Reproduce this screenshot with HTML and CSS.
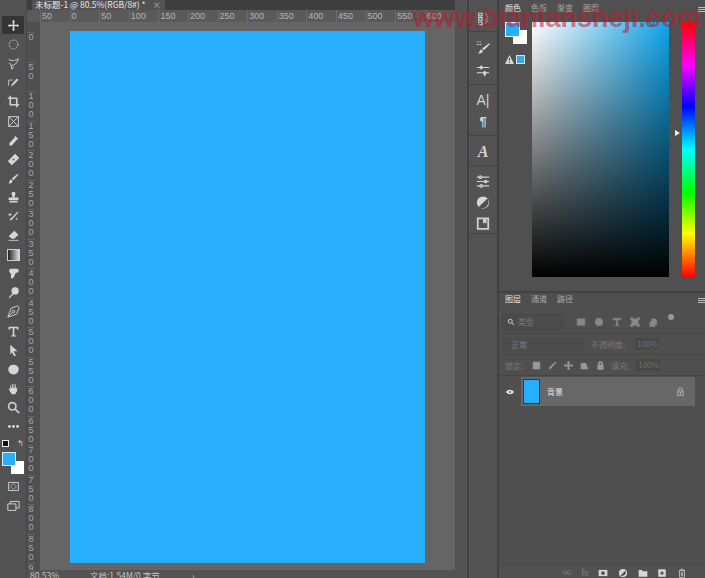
FILE: index.html
```html
<!DOCTYPE html>
<html lang="zh-CN">
  <head>
    <meta charset="UTF-8" />
    <title>未标题-1</title>
    <link rel="stylesheet" href="styles.css">
  </head>
  <body>
    <div class="app">
      <div class="tools">
        <span class="tool active"><svg viewBox="0 0 16 16"><path d="M8 1l2 2.500H9v3.500h3.500V6L15 8l-2.500 2V9H9v3.500h1L8 15l-2-2.500h1V9H3.500v1L1 8l2.500-2v1H7V3.500H6z"/></svg></span>
        <span class="tool"><svg viewBox="0 0 16 16" class="line"><circle cx="8" cy="8" r="5.500" stroke-dasharray="2 1.500"/></svg></span>
        <span class="tool"><svg viewBox="0 0 16 16" class="line"><path d="M2 3c4 2 8 2 12-1-1 4-3 7-6 8-2 1-4 0-5-3M5 10l1 5 2-3"/></svg></span>
        <span class="tool"><svg viewBox="0 0 16 16"><path d="M6 10l6-7 2 2-6 6-3 2z"/><path class="thin" d="M2 12V5h5" fill="none"/></svg></span>
        <span class="tool"><svg viewBox="0 0 16 16" class="line wide"><path d="M4 1v11h11M1 4h11v11"/></svg></span>
        <span class="tool"><svg viewBox="0 0 16 16" class="line"><path d="M2 2h12v12H2zM2 2l12 12M14 2L2 14"/></svg></span>
        <span class="tool"><svg viewBox="0 0 16 16"><path d="M10 2l4 4-2 1-6 7H3v-3l6-6z"/></svg></span>
        <span class="tool"><svg viewBox="0 0 16 16"><path d="M10 1l5 5-9 9-5-5z"/><path class="cut" d="M7 7h2v2H7z"/></svg></span>
        <span class="tool"><svg viewBox="0 0 16 16"><path d="M13 2l1 1-6 7-2-2zM5 9l2 2c-1 3-3 3-5 3 1-1 1-4 3-5z"/></svg></span>
        <span class="tool"><svg viewBox="0 0 16 16"><path d="M8 1a2.500 2.500 0 012 4l-1 3h5v3H2V8h5L6 5a2.500 2.500 0 012-4zM3 12h10v2H3z"/></svg></span>
        <span class="tool"><svg viewBox="0 0 16 16"><path d="M13 2l1 1-9 10-2-1z"/><path d="M3 3l1 2 2-1-1 2 1 1-2-.5L3 8l-.5-2L1 5h2zM12 9l.5 1.500L14 11l-1.500.5L12 13l-.5-1.500L10 11l1.500-.5z"/></svg></span>
        <span class="tool"><svg viewBox="0 0 16 16"><path d="M9 2l5 5-5 5H6L2 9z"/><path class="thin" d="M2 14h12"/></svg></span>
        <span class="tool"><span class="gradient-tool"></span></span>
        <span class="tool"><svg viewBox="0 0 16 16"><path d="M5 2h7c2 0 3 2 2 4l-4 2c0 3-2 6-4 6s-1-3-1-5L3 6c-1-2 0-4 2-4z"/></svg></span>
        <span class="tool"><svg viewBox="0 0 16 16"><circle cx="10" cy="6" r="4.500"/><path d="M7 9l1 1-5 5-1-1z"/></svg></span>
        <span class="tool"><svg viewBox="0 0 16 16" class="line"><path d="M13 1L5 4 2 12l-1 3 3-1 8-3 3-8zM2 14l5-5"/><circle cx="8" cy="8" r="1.500"/></svg></span>
        <span class="tool"><svg viewBox="0 0 16 16"><path d="M2 2h12v4h-1c0-1-1-2-2-2H9v8c0 1 1 1 2 1v1H5v-1c1 0 2 0 2-1V4H5C4 4 3 5 3 6H2z"/></svg></span>
        <span class="tool"><svg viewBox="0 0 16 16"><path d="M4 1l9 8H8l3 5-2 1-3-5-2 3z"/></svg></span>
        <span class="tool"><svg viewBox="0 0 16 16"><ellipse cx="8" cy="8" rx="6.500" ry="6"/></svg></span>
        <span class="tool"><svg viewBox="0 0 16 16"><path d="M4 8V4h1v3h1V2h1v5h1V2h1v5h1V3h1v6l1-2h1l-1 5-2 3H6L2 9l1-1z"/></svg></span>
        <span class="tool"><svg viewBox="0 0 16 16" class="line wide"><circle cx="6.500" cy="6.500" r="4.500"/><path d="M10 10l5 5"/></svg></span>
        <span class="tool"><svg viewBox="0 0 16 16"><circle cx="3" cy="8" r="1.800"/><circle cx="8" cy="8" r="1.800"/><circle cx="13" cy="8" r="1.800"/></svg></span>
        <div class="swatch-keys"><span class="default-key"></span><span class="swap-key">↰</span></div>
        <div class="swatches"><span class="back"></span><span class="fore"></span></div>
        <span class="tool"><svg viewBox="0 0 16 16" class="line"><path d="M2 3h12v10H2z"/><circle cx="8" cy="8" r="3" stroke-dasharray="1.500 1"/></svg></span>
        <span class="tool"><svg viewBox="0 0 16 16" class="line"><path d="M1 6h10v8H1zM4 6V3h11v8h-4"/></svg></span>
      </div>

      <div class="document">
        <div class="tabbar">
          <div class="tab">未标题-1 @ 80.5%(RGB/8#) * <span class="tab-close">×</span></div>
        </div>
        <div class="ruler-top">
          <span>50</span><span>0</span><span>50</span><span>100</span><span>150</span><span>200</span><span>250</span><span>300</span><span>350</span><span>400</span><span>450</span><span>500</span><span>550</span><span>600</span>
        </div>
        <div class="doc-body">
          <div class="ruler-left">
            <span>0</span><span>5 0</span><span>1 0 0</span><span>1 5 0</span><span>2 0 0</span><span>2 5 0</span><span>3 0 0</span><span>3 5 0</span><span>4 0 0</span><span>4 5 0</span><span>5 0 0</span><span>5 5 0</span><span>6 0 0</span><span>6 5 0</span><span>7 0 0</span><span>7 5 0</span><span>8 0 0</span><span>8 5 0</span><span>9</span>
          </div>
          <div class="workspace"><div class="canvas"></div></div>
        </div>
        <div class="statusbar">
          <span class="zoom-value">80.53%</span>
          <span class="doc-size">文档:1.54M/0 字节</span>
          <span class="status-arrow">›</span>
        </div>
      </div>

      <div class="gutter"></div>

      <div class="dock">
        <div class="dock-group">
          <span class="dock-icon"><svg viewBox="0 0 16 16" class="line"><path d="M3 2h4v3H3zM3 7h4v3H3zM3 12h4v3H3zM10 2c4 2 4 6 1 8l2 1-3 3"/></svg></span>
        </div>
        <div class="dock-group wide-gap">
          <span class="dock-icon"><svg viewBox="0 0 16 16"><path d="M15 3l1 1-7 7-2-2zM6 10l2 2c-1 3-4 3-6 3 2-1 2-4 4-5zM1 1h2v1H1zM4 1h2v1H4zM1 4h2v1H1zM4 4h2v1H4z"/></svg></span>
          <span class="dock-icon"><svg viewBox="0 0 16 16"><path d="M1 4h3l2-2 2 2h7v1H8L6 7 4 5H1zM1 10h7l2-2 2 2h3v1h-3l-2 4-2-4H1z"/></svg></span>
        </div>
        <div class="dock-group">
          <span class="dock-text">A|</span>
          <span class="dock-text para">¶</span>
        </div>
        <div class="dock-group">
          <span class="dock-text serif">A</span>
        </div>
        <div class="dock-group">
          <span class="dock-icon"><svg viewBox="0 0 16 16" class="line"><path d="M1 3h14M1 8h14M1 13h14"/><circle cx="5" cy="3" r="1.500"/><circle cx="11" cy="8" r="1.500"/><circle cx="6" cy="13" r="1.500"/></svg></span>
          <span class="dock-icon"><svg viewBox="0 0 16 16"><circle cx="8" cy="8" r="7"/><path class="cut" d="M13 3.500A7 7 0 013 13z"/></svg></span>
          <span class="dock-icon"><svg viewBox="0 0 16 16" class="line wide"><path d="M2 2h12v12H2z"/><path class="solid" d="M8 2h4v6l-2-1-2 1z"/></svg></span>
        </div>
      </div>

      <div class="panels">
        <div class="color-panel">
          <div class="panel-tabs">
            <span class="on">颜色</span><span>色板</span><span>渐变</span><span>图案</span>
            <span class="panel-menu"></span>
          </div>
          <div class="color-body">
            <div class="color-side">
              <div class="mini-swatches"><span class="mini-back"></span><span class="mini-fore"></span></div>
              <div class="gamut">
                <svg class="warn" viewBox="0 0 9 9"><path d="M4.500 0L9 9H0z"/><path class="cut" d="M4 3h1v3H4zM4 7h1v1H4z"/></svg>
                <span class="web-swatch"></span>
              </div>
            </div>
            <div class="picker"><span class="picker-mark"></span></div>
            <span class="hue-arrow"></span>
            <div class="hue"></div>
          </div>
        </div>

        <div class="layers-panel">
          <div class="panel-tabs">
            <span class="on">图层</span><span>通道</span><span>路径</span>
            <span class="panel-menu"></span>
          </div>
          <div class="layer-row filter-row">
            <span class="filter-box"><svg viewBox="0 0 16 16" class="line wide"><circle cx="6.500" cy="6.500" r="4"/><path d="M10 10l4 4"/></svg>类型</span>
            <span class="filter-icons">
              <svg viewBox="0 0 16 16" class="line"><path d="M2 3h12v10H2zM5 10V6l3 3 3-3v4"/></svg>
              <svg viewBox="0 0 16 16"><circle cx="8" cy="8" r="6"/></svg>
              <svg viewBox="0 0 16 16"><path d="M2 2h12v3h-1l-1-1H9v9h2v1H5v-1h2V4H4L3 5H2z"/></svg>
              <svg viewBox="0 0 16 16" class="line"><path d="M3 3h10v10H3zM1 1h3v3H1zM12 1h3v3h-3zM1 12h3v3H1zM12 12h3v3h-3z"/></svg>
              <svg viewBox="0 0 16 16" class="line"><path d="M3 8h8v7H3zM6 8V3h5l3 3v6h-3"/></svg>
            </span>
            <span class="filter-dot"></span>
          </div>
          <div class="layer-row blend-row">
            <span class="blend">正常</span>
            <span class="label opacity-label">不透明度:</span>
            <span class="value">100%</span>
          </div>
          <div class="layer-row lock-row">
            <span class="label lock-label">锁定:</span>
            <span class="lock-icons">
              <svg viewBox="0 0 16 16" class="line"><path d="M2 2h12v12H2zM2 6h12M2 10h12M6 2v12M10 2v12"/></svg>
              <svg viewBox="0 0 16 16"><path d="M13 2l1 1-9 10-3 1 1-3z"/></svg>
              <svg viewBox="0 0 16 16"><path d="M8 0l2 3H9v4h4V6l3 2-3 2V9H9v4h1l-2 3-2-3h1V9H3v1L0 8l3-2v1h4V3H6z"/></svg>
              <svg viewBox="0 0 16 16" class="line"><path d="M2 14V4h8l4 10z"/></svg>
              <svg viewBox="0 0 16 16"><path d="M4 7V5a4 4 0 018 0v2h1v8H3V7zm2 0h4V5a2 2 0 00-4 0z"/></svg>
            </span>
            <span class="label fill-label">填充:</span>
            <span class="value">100%</span>
          </div>
          <div class="layer-list">
            <div class="eye-cell"><svg viewBox="0 0 16 16"><path d="M0 8c4-6 12-6 16 0-4 6-12 6-16 0z"/><circle class="cut" cx="8" cy="8" r="2"/></svg></div>
            <div class="layer-item">
              <span class="thumb"></span>
              <span class="layer-name">背景</span>
              <svg class="layer-lock line" viewBox="0 0 16 16"><path d="M3 7h10v8H3zM5 7V4a3 3 0 016 0v3"/><path d="M7 10h2v2H7z"/></svg>
            </div>
          </div>
          <div class="layer-footer">
            <span class="dim">∞</span>
            <span class="dim fx">fx</span>
            <svg viewBox="0 0 16 16"><path d="M1 3h14v10H1z"/><circle class="cut" cx="8" cy="8" r="3"/></svg>
            <svg viewBox="0 0 16 16"><circle cx="8" cy="8" r="6.500"/><path class="cut" d="M12 4a6 6 0 01-8 8z"/></svg>
            <svg viewBox="0 0 16 16"><path d="M1 3h5l2 2h7v9H1z"/></svg>
            <svg viewBox="0 0 16 16"><path d="M2 2h12v12H2z"/><path class="cut" d="M7 5h2v2h2v2H9v2H7V9H5V7h2z"/></svg>
            <svg viewBox="0 0 16 16" class="line dim-icon"><path d="M3 4h10M6 4V2h4v2M4 4v11h8V4M7 6v7M9 6v7"/></svg>
          </div>
        </div>
      </div>
    </div>
    <div class="watermark">www.bianlanshejì.com</div>
  </body>
</html>
```

FILE: styles.css
```css
* {
  margin: 0;
  padding: 0;
  box-sizing: border-box;
}
body {
  width: 705px;
  height: 578px;
  overflow: hidden;
  background: #505050;
  font-family: "Noto Sans CJK SC", "Liberation Sans", sans-serif;
  color: #c8c8c8;
  position: relative;
}
svg {
  display: block;
  fill: #d6d6d6;
}
svg .thin {
  fill: none;
  stroke: #d6d6d6;
  stroke-width: 1;
}
svg .cut {
  fill: #505050;
}
svg.line {
  fill: none;
  stroke: #cfcfcf;
  stroke-width: 1.200;
}
svg.wide {
  stroke-width: 2;
}
.app {
  display: flex;
  height: 578px;
}

/* left toolbar */
.tools {
  width: 27px;
  flex: none;
  background: #525252;
  padding-top: 16px;
  display: flex;
  flex-direction: column;
  align-items: center;
  border-right: 1px solid #474747;
}
.tool {
  width: 22px;
  height: 19.100px;
  flex: none;
  display: flex;
  align-items: center;
  justify-content: center;
}
.tool svg {
  width: 13px;
  height: 13px;
}
.tool.active {
  background: #343434;
  height: 18px;
  margin-bottom: 1.100px;
}
.gradient-tool {
  width: 13px;
  height: 12px;
  border: 1px solid #cfcfcf;
  background: linear-gradient(90deg, #222, #ddd);
}
.swatch-keys {
  width: 22px;
  height: 8px;
  margin-top: 3px;
  display: flex;
  justify-content: space-between;
  align-items: center;
}
.default-key {
  width: 7px;
  height: 7px;
  background: #111;
  border: 1px solid #eee;
}
.swap-key {
  font-size: 8px;
  line-height: 8px;
  color: #ddd;
}
.swatches {
  width: 22px;
  height: 22px;
  margin-top: 5px;
  margin-bottom: 3px;
  position: relative;
}
.swatches .back {
  position: absolute;
  right: 0;
  bottom: 0;
  width: 13px;
  height: 13px;
  background: #fff;
}
.swatches .fore {
  position: absolute;
  left: 0;
  top: 0;
  width: 14px;
  height: 14px;
  background: #27aefc;
  border: 1px solid #d5eefc;
}

/* document */
.document {
  width: 428px;
  flex: none;
  display: flex;
  flex-direction: column;
  background: #535353;
}
.tabbar {
  height: 10px;
  background: #3e3e3e;
  overflow: hidden;
}
.tab {
  width: 133px;
  height: 10px;
  margin-left: 5px;
  padding-left: 3px;
  background: #525252;
  font-size: 8.500px;
  line-height: 8px;
  color: #e6e6e6;
  white-space: nowrap;
}
.tab-close {
  margin-left: 5px;
  color: #aaa;
}
.ruler-top {
  height: 12px;
  padding-left: 13px;
  background: #5a5a5a;
  display: flex;
  font-family: "Liberation Sans", sans-serif;
  font-size: 9px;
  line-height: 13px;
  color: #b5b5b5;
}
.ruler-top span {
  width: 29.600px;
  flex: none;
  padding-left: 1px;
  border-left: 1px solid #6c6c6c;
}
.doc-body {
  flex: 1;
  min-height: 0;
  display: flex;
}
.ruler-left {
  width: 13px;
  flex: none;
  padding-top: 10px;
  background: #4f4f4f;
  font-family: "Liberation Sans", sans-serif;
  font-size: 9px;
  line-height: 9.200px;
  color: #aaa;
  text-align: center;
  overflow: hidden;
}
.ruler-left span {
  display: block;
  width: 8px;
  height: 29.500px;
  border-top: 1px solid #646464;
}
.workspace {
  width: 415px;
  flex: none;
  background: #656565;
  padding: 9px 0 7px 30px;
}
.canvas {
  width: 355px;
  height: 532px;
  background: #27aefc;
}
.statusbar {
  height: 8px;
  flex: none;
  display: flex;
  font-size: 8.500px;
  line-height: 10px;
  color: #c4c4c4;
  overflow: hidden;
}
.zoom-value {
  width: 62px;
  padding-left: 3px;
}
.doc-size {
  width: 103px;
  padding-left: 1px;
  white-space: nowrap;
}

/* collapsed panel dock */
.gutter {
  width: 14px;
  flex: none;
  background: #535353;
  border-right: 2px solid #404040;
}
.dock {
  width: 30px;
  flex: none;
  padding-top: 4px;
  background: #535353;
  border-right: 2px solid #404040;
}
.dock-group {
  display: flex;
  flex-direction: column;
  align-items: center;
  gap: 6px;
  padding: 8px 0 6px;
  border-bottom: 1px solid #444;
}
.dock-group:first-child {
  padding: 7px 0 5px;
}
.dock-group:last-child {
  padding-bottom: 2px;
}
.dock-group.wide-gap {
  gap: 8px;
}
.dock-icon {
  width: 14px;
  height: 15px;
}
.dock-icon svg {
  width: 14px;
  height: 15px;
}
.dock-icon .solid {
  fill: #cfcfcf;
  stroke: none;
}
.dock-text {
  height: 15px;
  font-family: "Liberation Sans", sans-serif;
  font-size: 14px;
  line-height: 15px;
  color: #d4d4d4;
}
.dock-text.serif {
  font-family: "Liberation Serif", serif;
  font-style: italic;
  font-size: 16px;
  font-weight: bold;
}
.dock-text.para {
  font-size: 13px;
  font-weight: bold;
}

/* right panels */
.panels {
  width: 206px;
  flex: none;
  display: flex;
  flex-direction: column;
}
.panel-tabs {
  height: 13px;
  padding-left: 6px;
  display: flex;
  gap: 10px;
  font-size: 8px;
  line-height: 10px;
  color: #aaa;
  position: relative;
}
.panel-tabs .on {
  color: #e4e4e4;
}
.panel-menu {
  position: absolute;
  right: 0;
  top: 4px;
  width: 7px;
  height: 5px;
  border-top: 1px solid #bbb;
  border-bottom: 1px solid #bbb;
  background: linear-gradient(#bbb, #bbb) center / 100% 1px no-repeat;
}
.color-panel {
  height: 293px;
  background: #505050;
  padding-top: 3px;
  border-bottom: 2px solid #424242;
}
.color-body {
  height: 262px;
  margin-top: 6px;
  display: flex;
  align-items: flex-start;
}
.color-side {
  width: 33px;
  flex: none;
  padding-left: 6px;
}
.mini-swatches {
  width: 22px;
  height: 22px;
  position: relative;
}
.mini-back {
  position: absolute;
  right: 0;
  bottom: 0;
  width: 14px;
  height: 14px;
  background: #fff;
}
.mini-fore {
  position: absolute;
  left: 0;
  top: 0;
  width: 15px;
  height: 15px;
  background: #27aefc;
  border: 1px solid #e2f2fc;
}
.gamut {
  margin-top: 11px;
  display: flex;
  align-items: center;
  gap: 2px;
}
.warn {
  width: 9px;
  height: 9px;
  flex: none;
}
.web-swatch {
  width: 9px;
  height: 9px;
  background: #3ba5e0;
  border: 1px solid #cfe3ef;
}
.picker {
  width: 137px;
  height: 255px;
  flex: none;
  position: relative;
  background: linear-gradient(to top, #000, rgba(0, 0, 0, 0)), linear-gradient(to right, #fff, #0ea5ec);
}
.picker-mark {
  position: absolute;
  left: 114px;
  top: -3px;
  width: 8px;
  height: 8px;
  border: 1px solid #2a5a7a;
  border-radius: 50%;
}
.hue-arrow {
  width: 0;
  height: 0;
  margin: 108px 2px 0 6px;
  flex: none;
  border-top: 3px solid transparent;
  border-bottom: 3px solid transparent;
  border-left: 5px solid #eee;
}
.hue {
  width: 13px;
  height: 255px;
  flex: none;
  background: linear-gradient(to bottom, #f00 0%, #f0f 17%, #00f 33%, #0ff 50%, #0f0 67%, #ff0 83%, #f00 100%);
}
.layers-panel {
  flex: 1;
  background: #4f4f4f;
  padding-top: 1px;
  display: flex;
  flex-direction: column;
}
.layer-row {
  display: flex;
  align-items: center;
  padding-left: 3px;
  font-size: 8px;
  color: #7a7a7a;
}
.filter-row {
  height: 24px;
  margin-top: 3px;
  border-bottom: 1px solid #474747;
}
.filter-box {
  width: 62px;
  height: 16px;
  display: flex;
  align-items: center;
  gap: 3px;
  padding-left: 4px;
  background: #4b4b4b;
  border: 1px solid #474747;
}
.filter-box svg {
  width: 8px;
  height: 8px;
}
.filter-icons {
  margin-left: 12px;
  display: flex;
  gap: 8px;
}
.filter-icons svg {
  width: 10px;
  height: 10px;
  fill: #888;
  stroke: #888;
}
.filter-dot {
  width: 6px;
  height: 6px;
  margin: -10px 0 0 10px;
  border-radius: 50%;
  background: #999;
}
.blend-row {
  height: 21px;
  border-bottom: 1px solid #474747;
}
.blend {
  width: 82px;
  height: 15px;
  padding-left: 9px;
  line-height: 15px;
  color: #7d7d7d;
  background: #4c4c4c;
}
.opacity-label {
  margin-left: 7px;
  width: 41px;
}
.value {
  width: 24px;
  height: 12px;
  margin-left: 3px;
  padding-left: 2px;
  line-height: 12px;
  background: #484848;
  color: #6f6f6f;
}
.lock-row {
  height: 21px;
  border-bottom: 1px solid #444;
}
.label {
  color: #777;
  white-space: nowrap;
}
.lock-label {
  margin-left: 3px;
}
.lock-icons {
  margin-left: 9px;
  display: flex;
  gap: 7px;
}
.lock-icons svg {
  width: 9px;
  height: 9px;
  fill: #999;
  stroke: #999;
}
.fill-label {
  margin-left: 6px;
  width: 22px;
}
.layer-list {
  height: 29px;
  margin-top: 1px;
  display: flex;
}
.eye-cell {
  width: 22px;
  display: flex;
  align-items: center;
  justify-content: center;
}
.eye-cell svg {
  width: 10px;
  height: 8px;
  fill: #e4e4e4;
}
.layer-item {
  width: 174px;
  display: flex;
  align-items: center;
  background: #676767;
  padding-left: 2px;
}
.thumb {
  width: 17px;
  height: 25px;
  background: #27aefc;
  border: 1px solid #2a3a46;
}
.layer-name {
  margin-left: 7px;
  font-size: 8px;
  color: #e4e4e4;
}
.layer-lock {
  width: 9px;
  height: 9px;
  margin-left: auto;
  margin-right: 10px;
}
.layer-footer {
  margin-top: auto;
  height: 14px;
  display: flex;
  align-items: center;
  justify-content: flex-end;
  gap: 9.700px;
  padding: 2px 18px 0 0;
  border-top: 1px solid #474747;
  background: #515151;
}
.layer-footer svg {
  width: 10px;
  height: 10px;
}
.layer-footer .dim {
  font-size: 9px;
  line-height: 10px;
  color: #7d7d7d;
}
.dim-icon {
  stroke: #888;
}

/* red site watermark sits over the ps window */
.watermark {
  position: absolute;
  left: 413px;
  top: 3px;
  font-family: "Liberation Sans", sans-serif;
  font-size: 27px;
  font-weight: bold;
  line-height: 30px;
  white-space: nowrap;
  color: rgba(190, 25, 45, 0.55);
}
```
